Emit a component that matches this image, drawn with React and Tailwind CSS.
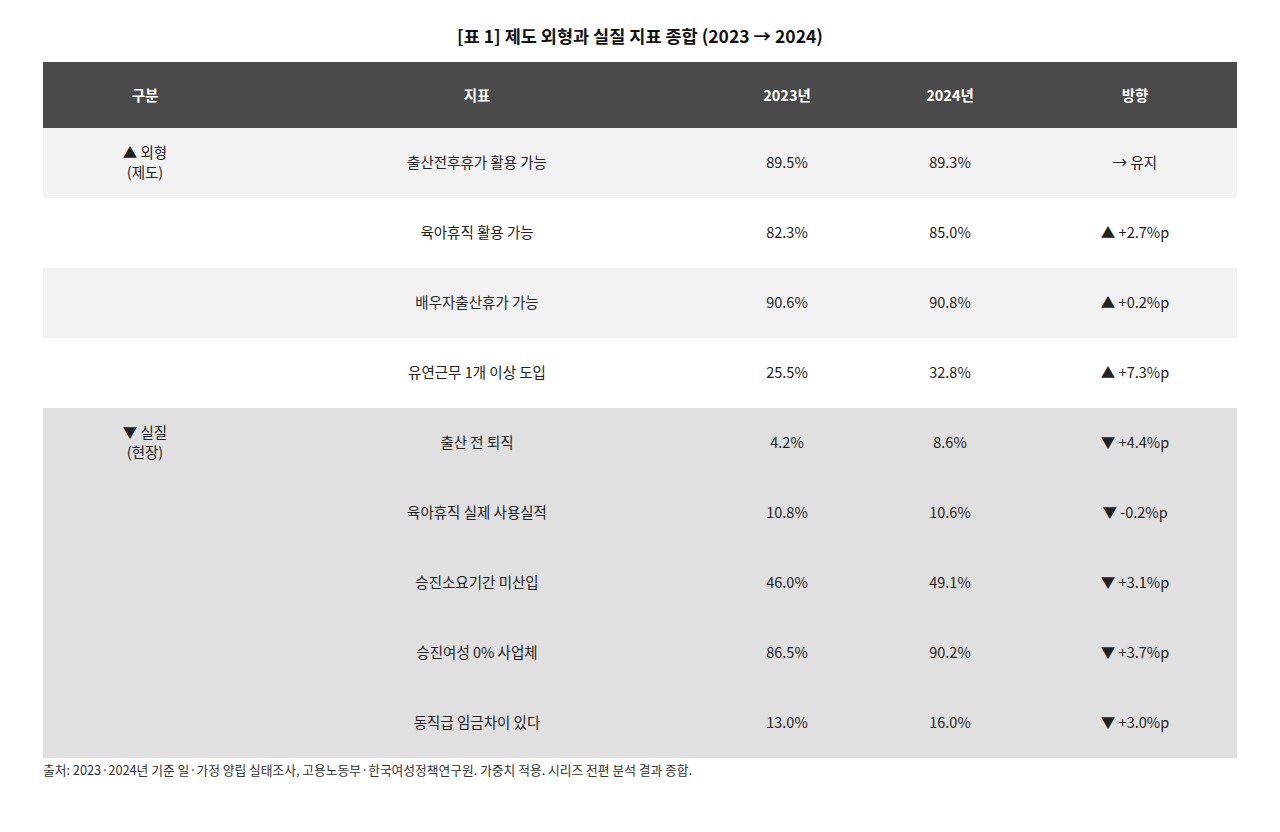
import React from 'react';

const groups = [
  {
    mark: '▲ 외형',
    sub: '(제도)',
    tone: 'alt',
    rows: [
      ['출산전후휴가 활용 가능', '89.5%', '89.3%', '→ 유지'],
      ['육아휴직 활용 가능', '82.3%', '85.0%', '▲ +2.7%p'],
      ['배우자출산휴가 가능', '90.6%', '90.8%', '▲ +0.2%p'],
      ['유연근무 1개 이상 도입', '25.5%', '32.8%', '▲ +7.3%p'],
    ],
  },
  {
    mark: '▼ 실질',
    sub: '(현장)',
    tone: 'dark',
    rows: [
      ['출산 전 퇴직', '4.2%', '8.6%', '▼ +4.4%p'],
      ['육아휴직 실제 사용실적', '10.8%', '10.6%', '▼ -0.2%p'],
      ['승진소요기간 미산입', '46.0%', '49.1%', '▼ +3.1%p'],
      ['승진여성 0% 사업체', '86.5%', '90.2%', '▼ +3.7%p'],
      ['동직급 임금차이 있다', '13.0%', '16.0%', '▼ +3.0%p'],
    ],
  },
];

const rowBg = (tone, i) => {
  if (tone === 'dark') return 'bg-[#e0e0e0]';
  return i % 2 === 0 ? 'bg-[#f2f2f2]' : 'bg-white';
};

export default function App() {
  return (
    <div
      className="min-h-[832px] bg-white text-[#222222] px-[43px] pt-[24px]"
      style={{ fontFamily: '"Noto Sans CJK KR", "Noto Sans", sans-serif' }}
    >
      <h1 className="text-center text-[17.5px] font-bold leading-[24px] text-[#111111]">
        [표 1] 제도 외형과 실질 지표 종합 (2023 → 2024)
      </h1>

      <table className="mt-[14px] w-[1194px] border-collapse table-fixed text-[14.5px]">
        <colgroup>
          <col className="w-[204px]" />
          <col className="w-[460px]" />
          <col className="w-[160px]" />
          <col className="w-[166px]" />
          <col className="w-[204px]" />
        </colgroup>
        <thead>
          <tr className="bg-[#4a4a4a] text-white">
            {['구분', '지표', '2023년', '2024년', '방향'].map((h) => (
              <th key={h} className="h-[66px] text-center font-bold">
                {h}
              </th>
            ))}
          </tr>
        </thead>
        <tbody>
          {groups.map((g) =>
            g.rows.map((r, i) => (
              <tr key={r[0]} className={rowBg(g.tone, i)}>
                <td className="h-[70px] pb-[3px] text-center align-middle leading-[20px]">
                  {i === 0 && (
                    <>
                      <div>{g.mark}</div>
                      <div>{g.sub}</div>
                    </>
                  )}
                </td>
                {r.map((c, j) => (
                  <td key={j} className="h-[70px] pb-[3px] text-center align-middle">
                    {c}
                  </td>
                ))}
              </tr>
            ))
          )}
        </tbody>
      </table>

      <p className="mt-[3px] text-[12.75px] leading-[18px] text-[#333333]">
        출처: 2023·2024년 기준 일·가정 양립 실태조사, 고용노동부·한국여성정책연구원. 가중치 적용. 시리즈 전편 분석 결과 종합.
      </p>
    </div>
  );
}
